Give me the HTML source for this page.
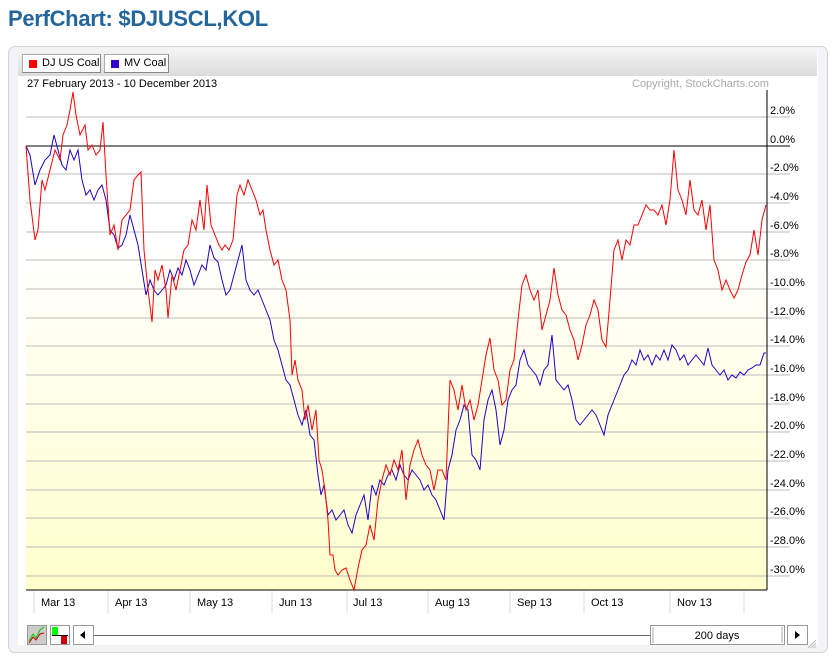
<!DOCTYPE html>
<html><head><meta charset="utf-8"><style>
body{margin:0;width:830px;height:665px;background:#fff;overflow:hidden;font-family:"Liberation Sans",Arial,sans-serif;position:relative}
h1{position:absolute;left:8px;top:6px;margin:0;font-size:22px;font-weight:bold;color:#23669c;letter-spacing:-0.3px}
.panel{position:absolute;left:8px;top:46px;width:818px;height:605px;border:1px solid #d4d4d4;border-radius:7px;background:#f4f4f6}
.inner{position:absolute;left:18px;top:50px;width:800px;height:595px;background:#fff}
.hdr{position:absolute;left:18px;top:50px;width:799px;height:26px;background:linear-gradient(#f4f4f4,#dcdcdc)}
.btn{position:absolute;top:54px;height:19px;box-sizing:border-box;background:#fff;border:1px solid #aaa;border-right-color:#888;border-bottom-color:#888;font-size:11px;line-height:17px;padding:0 0 0 19px;white-space:nowrap}
.btn i{position:absolute;left:6px;top:5px;width:8px;height:8px}
.t{position:absolute;font-size:11px;color:#000;white-space:nowrap}
</style></head><body>
<h1>PerfChart: $DJUSCL,KOL</h1>
<div class="panel"></div>
<div class="inner"></div>
<div class="hdr"></div>
<div class="btn" style="left:22px;width:79px"><i style="background:#f00"></i>DJ US Coal</div>
<div class="btn" style="left:104px;width:65px"><i style="background:#30c"></i>MV Coal</div>
<div class="t" style="left:27px;top:78px">27 February 2013 - 10 December 2013</div>
<div class="t" style="left:632px;top:78px;color:#aaa">Copyright, StockCharts.com</div>
<svg style="position:absolute;left:0;top:0" width="830" height="665">
<defs><linearGradient id="g" x1="0" y1="0" x2="0" y2="1"><stop offset="0.3" stop-color="#fff"/><stop offset="1" stop-color="#ffffcc"/></linearGradient></defs>
<rect x="26" y="90" width="741" height="500" fill="url(#g)"/>
<g stroke="#bbb" stroke-width="1">
<line x1="26" x2="790" y1="117" y2="117"/><line x1="26" x2="790" y1="174" y2="174"/><line x1="26" x2="790" y1="203" y2="203"/><line x1="26" x2="790" y1="232" y2="232"/><line x1="26" x2="790" y1="260" y2="260"/><line x1="26" x2="790" y1="289" y2="289"/><line x1="26" x2="790" y1="318" y2="318"/><line x1="26" x2="790" y1="346" y2="346"/><line x1="26" x2="790" y1="375" y2="375"/><line x1="26" x2="790" y1="404" y2="404"/><line x1="26" x2="790" y1="432" y2="432"/><line x1="26" x2="790" y1="461" y2="461"/><line x1="26" x2="790" y1="490" y2="490"/><line x1="26" x2="790" y1="518" y2="518"/><line x1="26" x2="790" y1="547" y2="547"/><line x1="26" x2="790" y1="576" y2="576"/>
</g>
<line x1="26" x2="790" y1="146" y2="146" stroke="#000"/>
<line x1="767" x2="767" y1="90" y2="590" stroke="#000"/>
<line x1="26" x2="767" y1="590" y2="590" stroke="#000"/>
<g stroke="#ddd"><line x1="34" x2="34" y1="591" y2="613"/><line x1="108" x2="108" y1="591" y2="613"/><line x1="190" x2="190" y1="591" y2="613"/><line x1="272" x2="272" y1="591" y2="613"/><line x1="347" x2="347" y1="591" y2="613"/><line x1="428" x2="428" y1="591" y2="613"/><line x1="510" x2="510" y1="591" y2="613"/><line x1="584" x2="584" y1="591" y2="613"/><line x1="670" x2="670" y1="591" y2="613"/><line x1="744" x2="744" y1="591" y2="613"/></g>
<g font-size="11" font-family="Liberation Sans,Arial,sans-serif">
<text x="770" y="114">2.0%</text><text x="770" y="143">0.0%</text><text x="770" y="171">-2.0%</text><text x="770" y="200">-4.0%</text><text x="770" y="229">-6.0%</text><text x="770" y="257">-8.0%</text><text x="770" y="286">-10.0%</text><text x="770" y="315">-12.0%</text><text x="770" y="343">-14.0%</text><text x="770" y="372">-16.0%</text><text x="770" y="401">-18.0%</text><text x="770" y="429">-20.0%</text><text x="770" y="458">-22.0%</text><text x="770" y="487">-24.0%</text><text x="770" y="515">-26.0%</text><text x="770" y="544">-28.0%</text><text x="770" y="573">-30.0%</text>
<text x="41" y="606">Mar 13</text><text x="115" y="606">Apr 13</text><text x="197" y="606">May 13</text><text x="279" y="606">Jun 13</text><text x="353" y="606">Jul 13</text><text x="435" y="606">Aug 13</text><text x="517" y="606">Sep 13</text><text x="591" y="606">Oct 13</text><text x="677" y="606">Nov 13</text>
</g>
<polyline fill="none" stroke="#2200cc" stroke-width="1" points="26,146 30,155 35,185 40,170 45,160 50,155 54,135 58,150 62,165 66,170 70,150 74,160 78,150 82,180 86,195 90,190 94,200 98,190 102,185 106,200 110,230 114,235 118,248 122,245 126,235 130,215 134,230 138,245 142,270 146,295 150,280 154,290 158,295 162,290 166,285 170,270 174,280 178,268 182,275 186,260 190,270 194,285 198,275 202,265 206,270 210,245 214,258 218,262 222,280 226,295 230,290 234,275 238,260 242,245 246,280 250,290 254,295 258,290 262,300 266,310 270,320 274,340 278,350 282,365 286,380 290,385 294,400 298,415 302,425 306,410 310,435 314,440 318,475 321,495 324,485 328,515 332,510 336,520 340,515 344,510 348,525 352,533 356,515 360,505 364,495 368,520 372,485 376,495 380,480 384,485 388,475 392,470 396,480 400,465 404,475 408,480 412,470 416,475 420,480 424,490 428,485 432,495 436,500 440,510 444,520 448,470 452,455 456,430 460,420 464,405 468,410 472,455 476,460 480,470 484,420 488,400 492,390 496,410 500,445 504,430 508,400 512,390 516,385 520,360 524,350 528,365 532,370 536,375 540,385 544,370 548,365 552,335 556,380 560,385 564,390 568,385 572,400 576,420 580,425 584,420 588,415 592,410 596,415 600,425 604,435 608,415 612,405 616,395 620,385 624,375 628,370 632,360 636,365 640,350 644,360 648,355 652,365 656,355 660,360 664,350 668,360 672,345 676,350 680,360 684,355 688,365 692,360 696,355 700,360 704,365 708,348 712,365 716,370 720,375 724,370 728,380 732,375 736,378 740,372 744,375 748,370 752,368 756,365 760,365 764,353 766,353"/>
<polyline fill="none" stroke="#ff0000" stroke-width="1" points="26,146 30,200 35,240 38,230 42,180 45,190 50,170 55,150 60,160 63,135 67,125 70,110 73,92 76,115 80,135 85,125 88,150 92,145 96,155 100,150 103,122 106,175 110,235 114,225 118,250 122,220 126,215 130,210 134,180 138,175 141,172 144,250 148,290 152,322 155,270 158,280 162,265 166,290 168,318 172,275 176,290 180,270 184,250 188,245 192,220 196,230 200,200 204,230 207,185 211,225 215,235 219,245 222,250 225,245 229,250 233,240 237,195 240,185 244,195 248,180 252,190 256,200 260,215 263,210 266,230 270,250 274,265 278,260 282,280 286,290 290,320 292,375 295,360 298,380 302,390 305,420 308,405 312,430 316,410 319,460 322,470 325,490 328,520 330,555 333,555 335,570 338,575 342,570 346,568 350,580 354,590 358,568 362,550 366,545 370,525 374,540 378,500 382,480 386,465 390,475 394,460 398,470 402,450 406,500 410,465 414,450 418,440 422,455 426,465 430,470 434,490 438,470 442,470 446,480 450,380 454,390 458,410 462,385 466,410 470,400 474,420 478,405 482,380 486,355 490,338 494,370 498,380 502,405 506,400 510,370 514,360 518,320 522,285 526,275 530,290 534,300 538,290 542,330 546,315 550,300 554,268 558,295 562,310 566,315 570,330 574,340 578,360 582,345 586,325 590,315 594,300 598,310 602,340 606,347 610,300 614,250 618,240 622,260 626,240 630,245 634,225 638,225 642,215 646,205 650,210 654,210 658,215 662,205 666,225 670,200 674,150 678,190 682,200 686,215 690,180 694,210 698,215 702,200 706,230 710,205 714,260 718,270 722,290 726,280 730,290 734,298 738,290 742,275 746,262 750,255 754,230 758,255 762,220 766,205"/>
<rect x="27.5" y="625.5" width="19" height="19" fill="#ccc" stroke="#999"/>
<polyline points="29,641 33,634 36,638 40,630 44,627" fill="none" stroke="#0c0"/>
<polyline points="29,643 33,637 36,640 40,634 44,633" fill="none" stroke="#c00"/>
<rect x="50.5" y="625.5" width="19" height="19" fill="#fff" stroke="#999"/>
<rect x="52" y="627" width="6" height="8" fill="#0f0"/><rect x="61" y="636" width="6" height="8" fill="#c00"/>
<line x1="52" x2="68" y1="635.5" y2="635.5" stroke="#000"/>
<rect x="73.5" y="625.5" width="20" height="19" fill="#fff" stroke="#999"/>
<polygon points="80,635 85,631 85,639" fill="#000"/>
<line x1="94" x2="650" y1="635.5" y2="635.5" stroke="#666"/>
<rect x="650.5" y="625.5" width="134" height="19" fill="#fff" stroke="#999"/>
<line x1="653" x2="653" y1="627" y2="643" stroke="#aaa"/><line x1="782" x2="782" y1="627" y2="643" stroke="#aaa"/>
<text x="717" y="639" font-size="11" text-anchor="middle" font-family="Liberation Sans,Arial,sans-serif">200 days</text>
<rect x="787.5" y="625.5" width="20" height="19" fill="#fff" stroke="#999"/>
<polygon points="795,631 800,635 795,639" fill="#000"/>
<g stroke="#bbb"><line x1="808" y1="648" x2="816" y2="640"/><line x1="811" y1="648" x2="816" y2="643"/><line x1="814" y1="648" x2="816" y2="646"/></g>
</svg>
</body></html>
